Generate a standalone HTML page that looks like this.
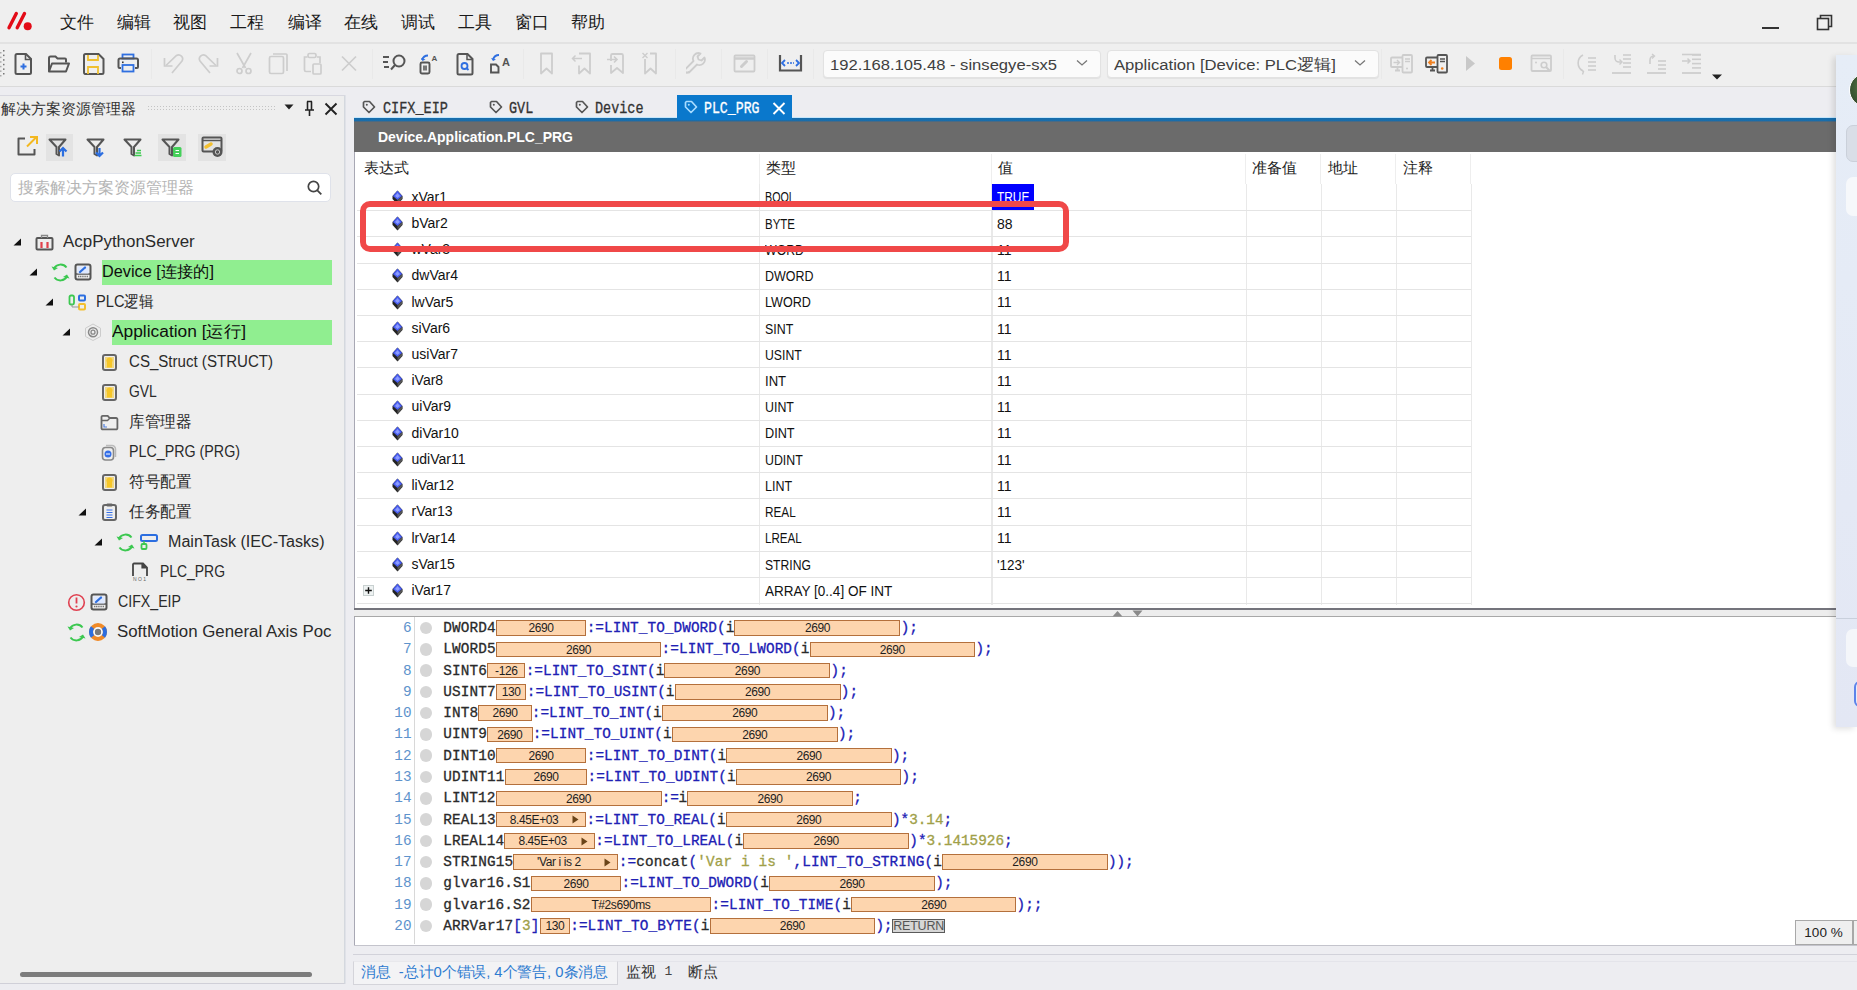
<!DOCTYPE html>
<html><head><meta charset="utf-8">
<style>
*{box-sizing:border-box}
body{margin:0;width:1857px;height:990px;position:relative;overflow:hidden;background:#ededf1;font-family:"Liberation Sans",sans-serif;color:#222}
.a{position:absolute}
#menubar{left:0;top:0;width:1857px;height:43px;background:#efefef}
#toolbar{left:0;top:42px;width:1857px;height:45px;background:#efefef;border-top:2px solid #e2e2e2;border-bottom:1px solid #dadada}
#leftpanel{left:0;top:95px;width:345px;box-shadow:1px 0 0 #e0e2e8;height:889px;background:#eeeeee;border-right:1px solid #d4d8de;border-top:1px solid #d8d8e0;border-bottom:1px solid #d0d0d8}
#doc{left:354px;top:118px;width:1503px;height:827px;background:#fff;border-left:1px solid #a8a8b4}
#bluebar{left:354px;top:117px;width:1503px;height:5px;background:linear-gradient(#c4e6fc 0,#c4e6fc 1px,#176cac 1px,#1a6eaa 4px,#4a6a84 4px)}
#dochdr{left:354px;top:122px;width:1503px;height:30px;background:#6b6b6b}
.mi{top:13px;font-size:17px;line-height:20px;color:#1a1a1a;white-space:nowrap}
.dd{top:50px;height:28px;background:#fbfbfb;border:1px solid #e2e2e2;border-radius:4px;box-shadow:0 1px 1px rgba(0,0,0,0.06)}
.ddt{top:55.8px;font-size:15.5px;line-height:18px;color:#404040;white-space:nowrap}
.tr{font-size:16px;line-height:20px;white-space:nowrap}
.tab{top:100px;-webkit-text-stroke:0.25px currentColor;font-family:"Liberation Mono",monospace;font-size:13.5px;line-height:17px;color:#333;white-space:nowrap}
.th{top:159px;font-size:15px;line-height:18px;color:#222;white-space:nowrap}
.td{font-size:14px;line-height:18px;color:#111;white-space:nowrap}
.ln{font-family:"Liberation Mono",monospace;font-size:14.37px;line-height:18px;color:#5e93cc;text-align:right;white-space:nowrap}
.cd{-webkit-text-stroke:0.3px currentColor;font-family:"Liberation Mono",monospace;font-size:14.37px;line-height:18px;white-space:nowrap}
.bx{height:15.4px;background:#fdd5ae;border:1.4px solid #b4703c;overflow:hidden}
.bt{position:absolute;top:0;text-align:center;font-size:12px;line-height:14.5px;letter-spacing:-0.4px;color:#1e1e1e;white-space:nowrap}
.rt{height:14.5px;background:#d6d6d6;border:1.3px solid #5a5a5a;font-size:12.5px;line-height:12px;text-align:center;color:#555;letter-spacing:-0.2px}
</style></head><body>
<div id="menubar" class="a">
<svg class="a" style="left:0;top:0" width="40" height="40"><g stroke="#e30b17" stroke-width="3.4" stroke-linecap="round"><line x1="16.3" y1="13.5" x2="9" y2="27.8"/><line x1="24.5" y1="13.5" x2="17.2" y2="27.8"/></g><circle cx="27.7" cy="26.3" r="4" fill="#e30b17"/></svg>
<div class="a mi" style="left:59.5px">文件</div>
<div class="a mi" style="left:117px">编辑</div>
<div class="a mi" style="left:173px">视图</div>
<div class="a mi" style="left:230px">工程</div>
<div class="a mi" style="left:288px">编译</div>
<div class="a mi" style="left:344px">在线</div>
<div class="a mi" style="left:401px">调试</div>
<div class="a mi" style="left:458px">工具</div>
<div class="a mi" style="left:515px">窗口</div>
<div class="a mi" style="left:571px">帮助</div>
<div class="a" style="left:1762px;top:27px;width:17px;height:2px;background:#333"></div>
<svg class="a" style="left:1815px;top:13px" width="20" height="20"><rect x="2.5" y="5.5" width="11" height="11" fill="none" stroke="#333" stroke-width="1.6"/><path d="M5.5 5.5V2.5h11v11h-3" fill="none" stroke="#333" stroke-width="1.6"/></svg>
</div>
<div id="toolbar" class="a"></div>
<svg class="a" style="left:0px;top:44px" width="6" height="36" viewBox="0 0 6 36"><rect x="3" y="6.0" width="1.5" height="1.5" fill="#777"/><rect x="0" y="8.0" width="1.5" height="1.5" fill="#aaa"/><rect x="3" y="10.6" width="1.5" height="1.5" fill="#777"/><rect x="0" y="12.6" width="1.5" height="1.5" fill="#aaa"/><rect x="3" y="15.2" width="1.5" height="1.5" fill="#777"/><rect x="0" y="17.2" width="1.5" height="1.5" fill="#aaa"/><rect x="3" y="19.8" width="1.5" height="1.5" fill="#777"/><rect x="0" y="21.8" width="1.5" height="1.5" fill="#aaa"/><rect x="3" y="24.4" width="1.5" height="1.5" fill="#777"/><rect x="0" y="26.4" width="1.5" height="1.5" fill="#aaa"/><rect x="3" y="29.0" width="1.5" height="1.5" fill="#777"/><rect x="0" y="31.0" width="1.5" height="1.5" fill="#aaa"/></svg>
<svg class="a" style="left:13px;top:52px" width="22" height="24" viewBox="0 0 22 24"><path d="M2.5 3.5a1.5 1.5 0 0 1 1.5-1.5h9l5 5v13.5a1.5 1.5 0 0 1-1.5 1.5H4a1.5 1.5 0 0 1-1.5-1.5z" fill="none" stroke="#555" stroke-width="2"/><path d="M12.5 2v5.5h6" fill="none" stroke="#555" stroke-width="1.6"/><path d="M10.5 11.5v6M7.5 14.5h6" stroke="#2f6fe0" stroke-width="2"/></svg>
<svg class="a" style="left:47px;top:54px" width="24" height="21" viewBox="0 0 24 21"><path d="M2 17.5V4a1.5 1.5 0 0 1 1.5-1.5h5l2 2h7.5a1 1 0 0 1 1 1v3" fill="none" stroke="#555" stroke-width="2"/><path d="M2 17.5l3-8h17l-3 8z" fill="none" stroke="#555" stroke-width="2" stroke-linejoin="round"/></svg>
<svg class="a" style="left:82px;top:52px" width="24" height="24" viewBox="0 0 24 24"><path d="M2 3.5A1.5 1.5 0 0 1 3.5 2h13l5 5v13.5a1.5 1.5 0 0 1-1.5 1.5h-17A1.5 1.5 0 0 1 2 20.5z" fill="none" stroke="#555" stroke-width="2"/><path d="M6 3v5h10V3M6 22v-7h10v7" fill="none" stroke="#f0c030" stroke-width="1.8"/></svg>
<svg class="a" style="left:117px;top:53px" width="23" height="21" viewBox="0 0 23 21"><rect x="5.5" y="1.5" width="11" height="4" fill="none" stroke="#2f6fe0" stroke-width="1.8"/><path d="M4 15H2.5a1 1 0 0 1-1-1V7a1.5 1.5 0 0 1 1.5-1.5h16.5A1.5 1.5 0 0 1 21 7v7a1 1 0 0 1-1 1h-2" fill="none" stroke="#555" stroke-width="2"/><rect x="5.5" y="12" width="11" height="6.5" fill="none" stroke="#2f6fe0" stroke-width="1.8"/><rect x="5" y="8.5" width="1.6" height="1.6" fill="#333"/></svg>
<div class="a" style="left:151px;top:49px;width:1px;height:30px;background:#e9e9e9"></div>
<svg class="a" style="left:162px;top:53px" width="23" height="22" viewBox="0 0 23 22"><path d="M4 12.5L14.5 2.5a4 4 0 0 1 5.5 5.5L10 20" fill="none" stroke="#cdcdcd" stroke-width="1.7"/><path d="M2.5 5v8h8" fill="none" stroke="#cdcdcd" stroke-width="1.7"/></svg>
<svg class="a" style="left:197px;top:53px" width="23" height="22" viewBox="0 0 23 22"><path d="M19 12.5L8.5 2.5A4 4 0 0 0 3 8l10 12" fill="none" stroke="#cdcdcd" stroke-width="1.7"/><path d="M20.5 5v8h-8" fill="none" stroke="#cdcdcd" stroke-width="1.7"/></svg>
<svg class="a" style="left:234px;top:52px" width="20" height="23" viewBox="0 0 20 23"><path d="M3 1l8.5 15M17 1L8.5 16" stroke="#cdcdcd" stroke-width="1.7"/><circle cx="5.5" cy="19" r="2.5" fill="none" stroke="#cdcdcd" stroke-width="1.7"/><circle cx="14.5" cy="19" r="2.5" fill="none" stroke="#cdcdcd" stroke-width="1.7"/></svg>
<svg class="a" style="left:268px;top:52px" width="21" height="23" viewBox="0 0 21 23"><rect x="1.5" y="4.5" width="14" height="17" rx="1.5" fill="none" stroke="#cdcdcd" stroke-width="1.7"/><path d="M5 2h13a1 1 0 0 1 1 1v16" fill="none" stroke="#cdcdcd" stroke-width="1.7"/></svg>
<svg class="a" style="left:303px;top:52px" width="20" height="23" viewBox="0 0 20 23"><path d="M8 19.5H3a1.5 1.5 0 0 1-1.5-1.5V5h3M14 5h3v6" fill="none" stroke="#cdcdcd" stroke-width="1.7"/><rect x="5" y="1.5" width="8" height="4" rx="1.5" fill="none" stroke="#cdcdcd" stroke-width="1.7"/><rect x="10" y="12" width="8" height="10" rx="1" fill="none" stroke="#cdcdcd" stroke-width="1.7"/></svg>
<svg class="a" style="left:341px;top:55px" width="16" height="17" viewBox="0 0 16 17"><path d="M1 1.5l14 14M15 1.5l-14 14" stroke="#cdcdcd" stroke-width="1.7"/></svg>
<div class="a" style="left:372px;top:49px;width:1px;height:30px;background:#e9e9e9"></div>
<svg class="a" style="left:382px;top:54px" width="26" height="19" viewBox="0 0 26 19"><path d="M1 3h6M1 8h5M2 13h5" stroke="#555" stroke-width="1.8"/><circle cx="17" cy="7" r="5.5" fill="none" stroke="#555" stroke-width="2"/><path d="M13 11l-4 4.5" stroke="#555" stroke-width="2"/></svg>
<svg class="a" style="left:419px;top:53px" width="21" height="22" viewBox="0 0 21 22"><rect x="1.5" y="9.5" width="9" height="11" rx="1.5" fill="none" stroke="#555" stroke-width="1.9"/><rect x="4" y="12.5" width="4" height="5" fill="#777"/><path d="M3 7c1-3 3-4.5 6-4.5" fill="none" stroke="#2f6fe0" stroke-width="2"/><path d="M2 5l1.5 3 3-1.5" fill="#2f6fe0"/><text x="12.5" y="8" font-size="8" fill="#555" font-family="Liberation Sans" font-weight="bold">A</text></svg>
<svg class="a" style="left:455px;top:52px" width="21" height="24" viewBox="0 0 21 24"><path d="M2.5 3.5A1.5 1.5 0 0 1 4 2h8.5l5 5v14a1.5 1.5 0 0 1-1.5 1.5H4a1.5 1.5 0 0 1-1.5-1.5z" fill="none" stroke="#555" stroke-width="2"/><path d="M12 2v5.5h5.5" fill="none" stroke="#555" stroke-width="1.5"/><circle cx="9.5" cy="14" r="3" fill="none" stroke="#2f6fe0" stroke-width="1.8"/><path d="M11.5 16l2 2" stroke="#2f6fe0" stroke-width="1.8"/></svg>
<svg class="a" style="left:489px;top:53px" width="23" height="21" viewBox="0 0 23 21"><path d="M2 19.5v-8h5l2.5 2.5v5.5z" fill="none" stroke="#555" stroke-width="1.9"/><path d="M4 6.5c1-3 3-4.5 6-4.5" fill="none" stroke="#2f6fe0" stroke-width="2"/><path d="M2 5l2 3 3-1.5" fill="#2f6fe0"/><text x="13" y="13" font-size="11" fill="#555" font-family="Liberation Sans" font-weight="bold">A</text></svg>
<div class="a" style="left:523px;top:49px;width:1px;height:30px;background:#e9e9e9"></div>
<svg class="a" style="left:536px;top:52px" width="22" height="23" viewBox="0 0 22 23"><path d="M5 1.5h11v20l-5.5-5-5.5 5z" fill="none" stroke="#cdcdcd" stroke-width="1.8" stroke-linejoin="round"/></svg>
<svg class="a" style="left:571px;top:52px" width="23" height="23" viewBox="0 0 23 23"><path d="M8 1.5h11v20l-5.5-5-5.5 5v-8" fill="none" stroke="#cdcdcd" stroke-width="1.8" stroke-linejoin="round"/><path d="M11 6.5H1.5M4.5 3.5l-3 3 3 3" fill="none" stroke="#cdcdcd" stroke-width="1.5"/></svg>
<svg class="a" style="left:606px;top:52px" width="22" height="23" viewBox="0 0 22 23"><path d="M5 9V3.5a1.5 1.5 0 0 1 1.5-1.5h9A1.5 1.5 0 0 1 17 3.5v17.5l-6-5-6 5v-8" fill="none" stroke="#cdcdcd" stroke-width="1.8" stroke-linejoin="round"/><path d="M1 7.5h10M8 4.5l3 3-3 3" fill="none" stroke="#cdcdcd" stroke-width="1.6"/></svg>
<svg class="a" style="left:642px;top:52px" width="20" height="23" viewBox="0 0 20 23"><path d="M3 7v14.5l5.5-5 5.5 5v-20h-6" fill="none" stroke="#cdcdcd" stroke-width="1.8" stroke-linejoin="round"/><path d="M0.5 1l5 5M5.5 1l-5 5" stroke="#cdcdcd" stroke-width="1.4"/></svg>
<div class="a" style="left:675px;top:49px;width:1px;height:30px;background:#e9e9e9"></div>
<svg class="a" style="left:686px;top:52px" width="24" height="24" viewBox="0 0 24 24"><path d="M3 20.5l8-8a5.5 5.5 0 0 0 7.5-7l-3 3-3-1-1-3 3-3a5.5 5.5 0 0 0-7 7.5l-8 8a2 2 0 0 0 3 3z" fill="none" stroke="#cdcdcd" stroke-width="1.8" stroke-linejoin="round"/></svg>
<div class="a" style="left:721px;top:49px;width:1px;height:30px;background:#e9e9e9"></div>
<svg class="a" style="left:733px;top:54px" width="23" height="19" viewBox="0 0 23 19"><rect x="1.5" y="1.5" width="20" height="16" rx="1" fill="none" stroke="#cdcdcd" stroke-width="1.8"/><path d="M1.5 4.5h20" stroke="#cdcdcd" stroke-width="2.5"/><path d="M8.5 12.5l5-5" stroke="#cdcdcd" stroke-width="3" stroke-linecap="round"/></svg>
<div class="a" style="left:767px;top:49px;width:1px;height:30px;background:#e9e9e9"></div>
<svg class="a" style="left:778px;top:54px" width="25" height="19" viewBox="0 0 25 19"><path d="M2 1v15.5h21V1" fill="none" stroke="#555" stroke-width="2.2"/><path d="M7 6l-3 3 3 3M18 6l3 3-3 3" fill="none" stroke="#2f6fe0" stroke-width="1.8"/><path d="M9 9h7" stroke="#2f6fe0" stroke-width="1.6" stroke-dasharray="2 1"/></svg>
<div class="a" style="left:813px;top:49px;width:1px;height:30px;background:#e9e9e9"></div>
<div class="a dd" style="left:822.5px;width:278px"></div><div class="a ddt" style="left:830.3px;--tw:227;transform:scale(1.0708,1.0);transform-origin:0 50%">192.168.105.48 - sinsegye-sx5</div>
<svg class="a" style="left:1075px;top:58px" width="14" height="10" viewBox="0 0 14 10"><path d="M2 2.5l5 4.5 5-4.5" fill="none" stroke="#777" stroke-width="1.3"/></svg>
<div class="a dd" style="left:1107px;width:272px"></div><div class="a ddt" style="left:1114px;--tw:222;transform:scale(1.0730,1.0);transform-origin:0 50%">Application [Device: PLC逻辑]</div>
<svg class="a" style="left:1353px;top:58px" width="14" height="10" viewBox="0 0 14 10"><path d="M2 2.5l5 4.5 5-4.5" fill="none" stroke="#777" stroke-width="1.3"/></svg>
<div class="a" style="left:1381px;top:49px;width:1px;height:30px;background:#e9e9e9"></div>
<svg class="a" style="left:1390px;top:54px" width="23" height="20" viewBox="0 0 23 20"><rect x="1" y="3.5" width="12" height="9.5" rx="1" fill="none" stroke="#cdcdcd" stroke-width="1.8"/><path d="M5 16.5h5M7.5 13v3.5" stroke="#cdcdcd" stroke-width="1.8"/><rect x="12.5" y="1" width="9.5" height="17.5" rx="1" fill="#efefef" stroke="#cdcdcd" stroke-width="1.8"/><path d="M15 5h5M15 7.5h5" stroke="#cdcdcd" stroke-width="1.5"/><path d="M3.5 8.5h6M7 6l2.5 2.5L7 11" fill="none" stroke="#cdcdcd" stroke-width="1.4"/><circle cx="17" cy="14.5" r="1" fill="#cdcdcd"/></svg>
<svg class="a" style="left:1425px;top:54px" width="23" height="20" viewBox="0 0 23 20"><rect x="1" y="3.5" width="12" height="9.5" rx="1" fill="none" stroke="#555" stroke-width="1.8"/><path d="M5 16.5h5M7.5 13v3.5" stroke="#555" stroke-width="1.8"/><rect x="12.5" y="1" width="9.5" height="17.5" rx="1" fill="#efefef" stroke="#555" stroke-width="1.8"/><path d="M15 5h5M15 7.5h5" stroke="#555" stroke-width="1.5"/><path d="M10 8.5H4M6.5 6L4 8.5 6.5 11" fill="none" stroke="#f08020" stroke-width="1.8"/><circle cx="17.2" cy="14.5" r="1.3" fill="#f08020"/></svg>
<svg class="a" style="left:1465px;top:55px" width="11" height="17" viewBox="0 0 11 17"><path d="M1 1l9 7.5-9 7.5z" fill="#c8c8c8"/></svg>
<div class="a" style="left:1499px;top:57px;width:13px;height:13px;background:#ff8000;border-radius:2.5px"></div>
<svg class="a" style="left:1530px;top:54px" width="23" height="20" viewBox="0 0 23 20"><rect x="1.5" y="1.5" width="19.5" height="15.5" rx="1" fill="none" stroke="#cdcdcd" stroke-width="1.8"/><path d="M1.5 4.5h19.5" stroke="#cdcdcd" stroke-width="1.5"/><circle cx="6" cy="8.5" r="1" fill="#cdcdcd"/><circle cx="14" cy="11" r="2.8" fill="none" stroke="#cdcdcd" stroke-width="1.6"/><path d="M16 13l3.5 3.5" stroke="#cdcdcd" stroke-width="2"/></svg>
<div class="a" style="left:1563px;top:49px;width:1px;height:30px;background:#e9e9e9"></div>
<svg class="a" style="left:1576px;top:52px" width="22" height="24" viewBox="0 0 22 24"><path d="M7 3a9 9 0 0 0 0 16" fill="none" stroke="#cdcdcd" stroke-width="1.6"/><path d="M4.5 17l3 2.5-1 3" fill="none" stroke="#cdcdcd" stroke-width="1.4"/><path d="M12 6.0h8" stroke="#cdcdcd" stroke-width="1.6"/><path d="M12 10.0h8" stroke="#cdcdcd" stroke-width="1.6"/><path d="M12 14.0h8" stroke="#cdcdcd" stroke-width="1.6"/><path d="M12 18.0h8" stroke="#cdcdcd" stroke-width="1.6"/></svg>
<svg class="a" style="left:1611px;top:52px" width="22" height="24" viewBox="0 0 22 24"><path d="M4 3v3a4 4 0 0 0 4 4h2" fill="none" stroke="#cdcdcd" stroke-width="1.6"/><path d="M8.5 7.5l2.5 2.5-2.5 2.5" fill="none" stroke="#cdcdcd" stroke-width="1.4"/><path d="M1 21h19" stroke="#cdcdcd" stroke-width="1.8"/><path d="M12 3.0h8" stroke="#cdcdcd" stroke-width="1.6"/><path d="M12 7.0h8" stroke="#cdcdcd" stroke-width="1.6"/><path d="M12 11.0h8" stroke="#cdcdcd" stroke-width="1.6"/><path d="M12 15.0h8" stroke="#cdcdcd" stroke-width="1.6"/></svg>
<svg class="a" style="left:1646px;top:52px" width="22" height="24" viewBox="0 0 22 24"><path d="M4 12V8a4 4 0 0 1 4-4" fill="none" stroke="#cdcdcd" stroke-width="1.6"/><path d="M6 2l2.5 2L6 6.5" fill="none" stroke="#cdcdcd" stroke-width="1.4"/><path d="M1 21h19" stroke="#cdcdcd" stroke-width="1.8"/><path d="M12 9.0h8" stroke="#cdcdcd" stroke-width="1.6"/><path d="M12 13.0h8" stroke="#cdcdcd" stroke-width="1.6"/><path d="M12 17.0h8" stroke="#cdcdcd" stroke-width="1.6"/></svg>
<svg class="a" style="left:1681px;top:52px" width="22" height="24" viewBox="0 0 22 24"><path d="M1 9h8M6.5 6.5L9 9l-2.5 2.5" fill="none" stroke="#cdcdcd" stroke-width="1.5"/><path d="M1 21h19" stroke="#cdcdcd" stroke-width="1.8"/><path d="M11 3.0h9" stroke="#cdcdcd" stroke-width="1.6"/><path d="M11 7.3h9" stroke="#cdcdcd" stroke-width="1.6"/><path d="M11 11.6h9" stroke="#cdcdcd" stroke-width="1.6"/><path d="M11 15.9h9" stroke="#cdcdcd" stroke-width="1.6"/><path d="M1 2.5h19" stroke="#cdcdcd" stroke-width="1.6"/></svg>
<svg class="a" style="left:1711px;top:74px" width="12" height="6" viewBox="0 0 12 6"><path d="M1 0.5h10L6 5.5z" fill="#222"/></svg>
<div id="leftpanel" class="a"></div>
<div class="a" style="left:1px;top:100px;font-size:15px;line-height:18px;color:#333;white-space:nowrap">解决方案资源管理器</div>
<div class="a" style="left:147px;top:105px;width:130px;height:6px;background-image:radial-gradient(circle,#c4c4c4 0.8px,transparent 0.9px);background-size:3px 3px"></div>
<svg class="a" style="left:284px;top:104px" width="10" height="6" viewBox="0 0 10 6"><path d="M0.5 0.5h9L5 5.5z" fill="#222"/></svg>
<svg class="a" style="left:304px;top:100px" width="11" height="17" viewBox="0 0 11 17"><path d="M3 1.5h5M3.5 1.5v8M7.5 1.5v8M1 10h9M5.5 10v6" fill="none" stroke="#222" stroke-width="1.6"/></svg>
<svg class="a" style="left:324px;top:102px" width="14" height="14" viewBox="0 0 14 14"><path d="M1.5 1.5l11 11M12.5 1.5l-11 11" stroke="#222" stroke-width="1.9"/></svg>
<div class="a" style="left:45.5px;top:134px;width:27.5px;height:27px;background:#e3e3e3"></div>
<div class="a" style="left:158px;top:134px;width:27.5px;height:27px;background:#e3e3e3"></div>
<div class="a" style="left:198px;top:134px;width:27.5px;height:27px;background:#e3e3e3"></div>
<svg class="a" style="left:16px;top:135px" width="24" height="22" viewBox="0 0 24 22"><path d="M9 3.5H2.5v16h16V14" fill="none" stroke="#555" stroke-width="2" stroke-linejoin="round"/><path d="M11 11.5L20.5 2M14 2h7v7" fill="none" stroke="#f3b820" stroke-width="2"/></svg>
<svg class="a" style="left:48px;top:137px" width="22" height="21" viewBox="0 0 22 21"><path d="M1.5 2.5h16l-6.5 7.5v8.5l-2.5-1.5v-7z" fill="none" stroke="#555" stroke-width="2" stroke-linejoin="round"/><path d="M15 19.5v-8M11.5 14.5l3.5-3.5 3.5 3.5" fill="none" stroke="#2c6ee0" stroke-width="2.2"/></svg>
<svg class="a" style="left:86px;top:137px" width="22" height="21" viewBox="0 0 22 21"><path d="M1.5 2.5h16l-6.5 7.5v8.5l-2.5-1.5v-7z" fill="none" stroke="#555" stroke-width="2" stroke-linejoin="round"/><path d="M13.5 11v8M10 15.5l3.5 3.5 3.5-3.5" fill="none" stroke="#2c6ee0" stroke-width="2.2"/></svg>
<svg class="a" style="left:123px;top:137px" width="22" height="21" viewBox="0 0 22 21"><path d="M1.5 2.5h16l-6.5 7.5v8.5l-2.5-1.5v-7z" fill="none" stroke="#555" stroke-width="2" stroke-linejoin="round"/><path d="M14 13.5h4M12.5 16h5.5M11.5 18.5h7" stroke="#3ccc50" stroke-width="1.3"/></svg>
<svg class="a" style="left:161px;top:137px" width="22" height="21" viewBox="0 0 22 21"><path d="M1.5 2.5h16l-6.5 7.5v8.5l-2.5-1.5v-7z" fill="none" stroke="#555" stroke-width="2" stroke-linejoin="round"/><rect x="12" y="10" width="8.5" height="10" rx="1.5" fill="#45d05a"/><path d="M14.5 13.5h3.5M14.5 16.5h3.5" stroke="#fff" stroke-width="1"/></svg>
<svg class="a" style="left:201px;top:136px" width="23" height="22" viewBox="0 0 23 22"><rect x="1.5" y="1.5" width="19" height="14" rx="1" fill="none" stroke="#555" stroke-width="2"/><path d="M1.5 4.5h19" stroke="#555" stroke-width="1.5"/><path d="M5 11l5-3" stroke="#f3c030" stroke-width="3.5" stroke-linecap="round"/><circle cx="16.5" cy="16" r="5" fill="#555"/><circle cx="16.5" cy="16" r="2.2" fill="none" stroke="#ccc" stroke-width="1"/></svg>
<div class="a" style="left:10px;top:173px;width:321px;height:29px;background:#fff;border:1px solid #dfe2ea;border-radius:5px"></div>
<div class="a" style="left:18px;top:178px;font-size:15.6px;line-height:19px;color:#b4b4b4;white-space:nowrap">搜索解决方案资源管理器</div>
<svg class="a" style="left:306px;top:179px" width="18" height="18" viewBox="0 0 18 18"><circle cx="7.5" cy="7.5" r="5.2" fill="none" stroke="#444" stroke-width="1.7"/><path d="M11.3 11.3l4 4" stroke="#444" stroke-width="1.8"/></svg>
<svg class="a" style="left:13px;top:238px" width="9" height="8" viewBox="0 0 9 8"><path d="M8 0.5V7.5H0.5z" fill="#111"/></svg>
<div class="a tr" style="left:63px;top:232px;color:#2a2a2a;--tw:131.7;transform:scale(1.0577,1.0);transform-origin:0 50%">AcpPythonServer</div>
<div class="a" style="left:102px;top:260px;width:230px;height:25px;background:#90ee90"></div>
<svg class="a" style="left:29px;top:268px" width="9" height="8" viewBox="0 0 9 8"><path d="M8 0.5V7.5H0.5z" fill="#111"/></svg>
<div class="a tr" style="left:102px;top:262px;color:#0f0f0f;--tw:112;transform:scale(1.0159,1.0);transform-origin:0 50%">Device [连接的]</div>
<svg class="a" style="left:45px;top:298px" width="9" height="8" viewBox="0 0 9 8"><path d="M8 0.5V7.5H0.5z" fill="#111"/></svg>
<div class="a tr" style="left:96px;top:292px;color:#2a2a2a;--tw:57.8;transform:scale(0.9156,1.0);transform-origin:0 50%">PLC逻辑</div>
<div class="a" style="left:111.7px;top:320px;width:220.3px;height:25px;background:#90ee90"></div>
<svg class="a" style="left:62px;top:328px" width="9" height="8" viewBox="0 0 9 8"><path d="M8 0.5V7.5H0.5z" fill="#111"/></svg>
<div class="a tr" style="left:112px;top:322px;color:#0f0f0f;--tw:134;transform:scale(1.0841,1.0);transform-origin:0 50%">Application [运行]</div>
<div class="a tr" style="left:128.5px;top:352px;color:#2a2a2a;--tw:144;transform:scale(0.9418,1.0);transform-origin:0 50%">CS_Struct (STRUCT)</div>
<div class="a tr" style="left:128.5px;top:382px;color:#2a2a2a;--tw:27.8;transform:scale(0.8683,1.0);transform-origin:0 50%">GVL</div>
<div class="a tr" style="left:128.5px;top:412px;color:#2a2a2a;--tw:62.6;transform:scale(0.9781,1.0);transform-origin:0 50%">库管理器</div>
<div class="a tr" style="left:128.5px;top:442px;color:#2a2a2a;--tw:111;transform:scale(0.8918,1.0);transform-origin:0 50%">PLC_PRG (PRG)</div>
<div class="a tr" style="left:128.5px;top:472px;color:#2a2a2a;--tw:62.6;transform:scale(0.9781,1.0);transform-origin:0 50%">符号配置</div>
<svg class="a" style="left:78px;top:508px" width="9" height="8" viewBox="0 0 9 8"><path d="M8 0.5V7.5H0.5z" fill="#111"/></svg>
<div class="a tr" style="left:128.5px;top:502px;color:#2a2a2a;--tw:62.6;transform:scale(0.9781,1.0);transform-origin:0 50%">任务配置</div>
<svg class="a" style="left:94px;top:538px" width="9" height="8" viewBox="0 0 9 8"><path d="M8 0.5V7.5H0.5z" fill="#111"/></svg>
<div class="a tr" style="left:167.5px;top:532px;color:#2a2a2a;--tw:156.5;transform:scale(1.0059,1.0);transform-origin:0 50%">MainTask (IEC-Tasks)</div>
<div class="a tr" style="left:160.3px;top:562px;color:#2a2a2a;--tw:65;transform:scale(0.8701,1.0);transform-origin:0 50%">PLC_PRG</div>
<div class="a tr" style="left:118.3px;top:592px;color:#2a2a2a;--tw:63;transform:scale(0.8856,1.0);transform-origin:0 50%">CIFX_EIP</div>
<div class="a tr" style="left:117.4px;top:622px;color:#2a2a2a;--tw:214.5;transform:scale(1.0532,1.0);transform-origin:0 50%">SoftMotion General Axis Poc</div>
<svg class="a" style="left:35px;top:234px" width="19" height="17" viewBox="0 0 19 17"><rect x="1.5" y="4" width="16" height="11.5" rx="1" fill="none" stroke="#555" stroke-width="2"/><path d="M6.5 4V1.5h6V4" fill="none" stroke="#888" stroke-width="1.3"/><path d="M6.5 8v6M12.5 8v6" stroke="#e0404a" stroke-width="2.2"/></svg>
<svg class="a" style="left:50px;top:263px" width="21" height="19" viewBox="0 0 21 19"><path d="M16.5 4.5A7.5 7.5 0 0 0 4 5.5" fill="none" stroke="#3cc850" stroke-width="2"/><path d="M1.5 3.5l2.5 4 4-2.5z" fill="#3cc850"/><path d="M4.5 14.5A7.5 7.5 0 0 0 17 13.5" fill="none" stroke="#3cc850" stroke-width="2"/><path d="M19.5 15.5l-2.5-4-4 2.5z" fill="#3cc850"/></svg>
<svg class="a" style="left:74px;top:263px" width="18" height="18" viewBox="0 0 18 18"><rect x="1.5" y="1.5" width="15" height="15" rx="2" fill="none" stroke="#555" stroke-width="2"/><path d="M1.5 11h15" stroke="#555" stroke-width="1.5"/><path d="M4 13.5h10" stroke="#777" stroke-width="1.5" stroke-dasharray="1.2 0.6"/><rect x="3.5" y="3.5" width="11" height="7" fill="#dde8ff"/><path d="M6 9l5-4.5" stroke="#2c6ee0" stroke-width="2.2" stroke-linecap="round"/></svg>
<svg class="a" style="left:68px;top:294px" width="19" height="17" viewBox="0 0 19 17"><rect x="1.5" y="1.5" width="4.5" height="9" rx="1.5" fill="none" stroke="#3cc850" stroke-width="1.8"/><rect x="11" y="1.5" width="6" height="5" rx="1" fill="none" stroke="#2c6ee0" stroke-width="2"/><rect x="11" y="10" width="6" height="5.5" rx="1" fill="none" stroke="#f3c030" stroke-width="2"/><path d="M4 10.5v2.5h7" fill="none" stroke="#999" stroke-width="1"/></svg>
<svg class="a" style="left:84px;top:323px" width="18" height="18" viewBox="0 0 18 18"><path d="M9 1l7.5 4.2v8.3L9 17.5 1.5 13.5V5.2z" fill="none" stroke="#ccc" stroke-width="1"/><circle cx="9" cy="9.2" r="4.5" fill="none" stroke="#888" stroke-width="1.5"/><circle cx="9" cy="9.2" r="2" fill="none" stroke="#888" stroke-width="1.3"/></svg>
<svg class="a" style="left:102px;top:354px" width="15" height="17" viewBox="0 0 15 17"><rect x="1" y="1" width="13" height="15" rx="2" fill="none" stroke="#666" stroke-width="2"/><path d="M7.5 3.5a3 3 0 0 1 2.5 4.8v5.2h-5V8.3a3 3 0 0 1 2.5-4.8z" fill="#f6c628"/><rect x="3" y="3" width="9" height="11" fill="#f6c628" opacity="0.55"/></svg>
<svg class="a" style="left:102px;top:384px" width="15" height="17" viewBox="0 0 15 17"><rect x="1" y="1" width="13" height="15" rx="2" fill="none" stroke="#666" stroke-width="2"/><path d="M7.5 3.5a3 3 0 0 1 2.5 4.8v5.2h-5V8.3a3 3 0 0 1 2.5-4.8z" fill="#f6c628"/><rect x="3" y="3" width="9" height="11" fill="#f6c628" opacity="0.55"/></svg>
<svg class="a" style="left:100px;top:414px" width="19" height="17" viewBox="0 0 19 17"><path d="M1.5 3a1.2 1.2 0 0 1 1.2-1.2h5l2 2.2h6.5a1.2 1.2 0 0 1 1.2 1.2v9a1.2 1.2 0 0 1-1.2 1.2H2.7a1.2 1.2 0 0 1-1.2-1.2z" fill="none" stroke="#666" stroke-width="1.8"/><path d="M1.5 6.5h6l2-2" fill="none" stroke="#666" stroke-width="1.4"/><path d="M4 10v3h3" fill="none" stroke="#5080e0" stroke-width="1.2"/></svg>
<svg class="a" style="left:101px;top:444px" width="16" height="17" viewBox="0 0 16 17"><path d="M5 1.5h6a3.5 3.5 0 0 1 3.5 3.5v8" fill="none" stroke="#bbb" stroke-width="1.5"/><rect x="1.5" y="3.5" width="11" height="12.5" rx="3" fill="#eee" stroke="#888" stroke-width="1.6"/><circle cx="7" cy="10" r="3.5" fill="#3670e8"/><path d="M5 10h4" stroke="#fff" stroke-width="1"/></svg>
<svg class="a" style="left:102px;top:474px" width="15" height="17" viewBox="0 0 15 17"><rect x="1" y="1" width="13" height="15" rx="2" fill="none" stroke="#666" stroke-width="2"/><path d="M7.5 3.5a3 3 0 0 1 2.5 4.8v5.2h-5V8.3a3 3 0 0 1 2.5-4.8z" fill="#f6c628"/><rect x="3" y="3" width="9" height="11" fill="#f6c628" opacity="0.55"/></svg>
<svg class="a" style="left:102px;top:503px" width="15" height="18" viewBox="0 0 15 18"><rect x="1" y="2" width="13" height="15" rx="2" fill="none" stroke="#666" stroke-width="2"/><rect x="4.5" y="0.5" width="6" height="3" rx="1" fill="#666"/><path d="M4.5 7h6M4.5 9.5h6M4.5 12h6M4.5 14.5h6" stroke="#3670e8" stroke-width="1.2"/></svg>
<svg class="a" style="left:115px;top:533px" width="21" height="19" viewBox="0 0 21 19"><path d="M16.5 4.5A7.5 7.5 0 0 0 4 5.5" fill="none" stroke="#3cc850" stroke-width="2"/><path d="M1.5 3.5l2.5 4 4-2.5z" fill="#3cc850"/><path d="M4.5 14.5A7.5 7.5 0 0 0 17 13.5" fill="none" stroke="#3cc850" stroke-width="2"/><path d="M19.5 15.5l-2.5-4-4 2.5z" fill="#3cc850"/></svg>
<svg class="a" style="left:140px;top:533px" width="18" height="18" viewBox="0 0 18 18"><rect x="1" y="2" width="16" height="6" rx="1.5" fill="none" stroke="#2c6ee0" stroke-width="2"/><rect x="1.5" y="11" width="5" height="5" rx="1" fill="none" stroke="#3cc850" stroke-width="1.8"/><path d="M4 8v3" stroke="#3cc850" stroke-width="1.5"/></svg>
<svg class="a" style="left:131px;top:561px" width="20" height="20" viewBox="0 0 20 20"><path d="M2 15V3.5a1 1 0 0 1 1-1h9l4 4V15" fill="none" stroke="#444" stroke-width="1.8"/><path d="M11 2.5v4.5h5" fill="#444" stroke="#444" stroke-width="1.2"/><text x="2" y="19.5" font-size="5" fill="#666" font-family="Liberation Sans">N O 1</text></svg>
<svg class="a" style="left:67px;top:593px" width="19" height="19" viewBox="0 0 19 19"><circle cx="9.5" cy="9.5" r="7.8" fill="none" stroke="#e04050" stroke-width="1.6"/><path d="M9.5 4.5v6" stroke="#e04050" stroke-width="1.8"/><circle cx="9.5" cy="13.5" r="1.1" fill="#e04050"/></svg>
<svg class="a" style="left:90px;top:593px" width="18" height="18" viewBox="0 0 18 18"><rect x="1.5" y="1.5" width="15" height="15" rx="2" fill="none" stroke="#555" stroke-width="2"/><path d="M1.5 11h15" stroke="#555" stroke-width="1.5"/><path d="M4 13.5h10" stroke="#777" stroke-width="1.5" stroke-dasharray="1.2 0.6"/><rect x="3.5" y="3.5" width="11" height="7" fill="#dde8ff"/><path d="M6 9l5-4.5" stroke="#2c6ee0" stroke-width="2.2" stroke-linecap="round"/></svg>
<svg class="a" style="left:66px;top:623px" width="21" height="19" viewBox="0 0 21 19"><path d="M16.5 4.5A7.5 7.5 0 0 0 4 5.5" fill="none" stroke="#3cc850" stroke-width="2"/><path d="M1.5 3.5l2.5 4 4-2.5z" fill="#3cc850"/><path d="M4.5 14.5A7.5 7.5 0 0 0 17 13.5" fill="none" stroke="#3cc850" stroke-width="2"/><path d="M19.5 15.5l-2.5-4-4 2.5z" fill="#3cc850"/></svg>
<svg class="a" style="left:88px;top:622px" width="20" height="20" viewBox="0 0 20 20"><circle cx="10" cy="10" r="7" fill="none" stroke="#f08a28" stroke-width="4"/><path d="M3 10a7 7 0 0 1 1.5-4.4M3 10a7 7 0 0 0 1.5 4.4M17 10a7 7 0 0 0-1.5-4.4M17 10a7 7 0 0 1-1.5 4.4" fill="none" stroke="#2c6ee0" stroke-width="4"/><circle cx="10" cy="10" r="4.2" fill="#fff"/><circle cx="10" cy="10" r="3.2" fill="#7a7a7a"/></svg>
<div class="a" style="left:20px;top:972px;width:292px;height:5px;background:#7c7c7c;border-radius:3px"></div>
<div id="doc" class="a"></div>
<div id="bluebar" class="a"></div>
<div id="dochdr" class="a"></div>
<div class="a" style="left:676.5px;top:95px;width:115.5px;height:25px;background:#0a78cc"></div>
<svg class="a" style="left:362px;top:100px" width="14" height="14" viewBox="0 0 14 14"><path d="M1.5 2.5l1-1h5l5 5.5-5.5 5.5L1.5 7z" fill="none" stroke="#555" stroke-width="1.7" stroke-linejoin="round"/><circle cx="4.8" cy="4.8" r="1" fill="#555"/></svg>
<div class="a tab" style="left:383px;--tw:65;--sy:1.22;transform:scale(1.0029,1.22);transform-origin:0 50%">CIFX_EIP</div>
<svg class="a" style="left:489px;top:100px" width="14" height="14" viewBox="0 0 14 14"><path d="M1.5 2.5l1-1h5l5 5.5-5.5 5.5L1.5 7z" fill="none" stroke="#555" stroke-width="1.7" stroke-linejoin="round"/><circle cx="4.8" cy="4.8" r="1" fill="#555"/></svg>
<div class="a tab" style="left:508.5px;--tw:24.3;--sy:1.22;transform:scale(0.9995,1.22);transform-origin:0 50%">GVL</div>
<svg class="a" style="left:575px;top:100px" width="14" height="14" viewBox="0 0 14 14"><path d="M1.5 2.5l1-1h5l5 5.5-5.5 5.5L1.5 7z" fill="none" stroke="#555" stroke-width="1.7" stroke-linejoin="round"/><circle cx="4.8" cy="4.8" r="1" fill="#555"/></svg>
<div class="a tab" style="left:594.5px;--tw:48.5;--sy:1.22;transform:scale(0.9977,1.22);transform-origin:0 50%">Device</div>
<svg class="a" style="left:683.5px;top:100px" width="14" height="14" viewBox="0 0 14 14"><path d="M1.5 2.5l1-1h5l5 5.5-5.5 5.5L1.5 7z" fill="none" stroke="#a8dcff" stroke-width="1.7" stroke-linejoin="round"/><circle cx="4.8" cy="4.8" r="1" fill="#a8dcff"/></svg>
<div class="a tab" style="left:703.5px;color:#fff;--tw:55.5;--sy:1.22;transform:scale(0.9785,1.22);transform-origin:0 50%">PLC_PRG</div>
<svg class="a" style="left:772px;top:102px" width="14" height="13" viewBox="0 0 14 13"><path d="M1.5 1l11 11M12.5 1l-11 11" stroke="#fff" stroke-width="1.9"/></svg>
<div class="a" style="left:378px;top:128px;font-size:14px;line-height:18px;font-weight:bold;color:#fff;white-space:nowrap;--tw:195;transform:scale(0.9986,1.0);transform-origin:0 50%">Device.Application.PLC_PRG</div>
<div class="a th" style="left:364px">表达式</div>
<div class="a th" style="left:766px">类型</div>
<div class="a th" style="left:998px">值</div>
<div class="a th" style="left:1252px">准备值</div>
<div class="a th" style="left:1328px">地址</div>
<div class="a th" style="left:1402.5px">注释</div>
<div class="a" style="left:758.5px;top:154px;width:1px;height:30px;background:#eeeeee"></div>
<div class="a" style="left:990.5px;top:154px;width:1px;height:30px;background:#eeeeee"></div>
<div class="a" style="left:1245px;top:154px;width:1px;height:30px;background:#eeeeee"></div>
<div class="a" style="left:1320px;top:154px;width:1px;height:30px;background:#eeeeee"></div>
<div class="a" style="left:1395px;top:154px;width:1px;height:30px;background:#eeeeee"></div>
<div class="a" style="left:1470px;top:154px;width:1px;height:30px;background:#eeeeee"></div>
<div class="a" style="left:758.5px;top:184px;width:1px;height:420.5px;background:#e8e8e8"></div>
<div class="a" style="left:991.0px;top:184px;width:1.6px;height:420.5px;background:#e9e9e9"></div>
<div class="a" style="left:1245.5px;top:184px;width:1.6px;height:420.5px;background:#e9e9e9"></div>
<div class="a" style="left:1320.5px;top:184px;width:1.6px;height:420.5px;background:#e9e9e9"></div>
<div class="a" style="left:1395.5px;top:184px;width:1.6px;height:420.5px;background:#e9e9e9"></div>
<div class="a" style="left:1470.5px;top:184px;width:1.6px;height:420.5px;background:#e9e9e9"></div>
<div class="a" style="left:357px;top:210.0px;width:1114px;height:1px;background:#e4e4e4"></div>
<div class="a" style="left:991.5px;top:184px;width:42.5px;height:25.5px;background:#0000ff"></div>
<svg class="a" style="left:391.5px;top:190px" width="11" height="15" viewBox="0 0 11 15"><path d="M5.5 0.5L10.5 6v3L5.5 14.5 0.5 9V6z" fill="#222"/><path d="M5.5 0.8L10.2 6 5.5 10 0.8 6z" fill="#4a5ef0"/><path d="M5.5 3L8 6 5.5 8 3 6z" fill="#8a9aff"/><path d="M5.5 10L10.2 6.2v2.6L5.5 14z" fill="#555"/></svg>
<div class="a td" style="left:411.5px;top:187.6px">xVar1</div>
<div class="a td" style="left:765px;top:188.4px;--tw:29.7;transform:scale(0.7634,1.0);transform-origin:0 50%">BOOL</div>
<div class="a td" style="left:997px;top:188.4px;color:#fff;--tw:32.4;transform:scale(0.8498,1.0);transform-origin:0 50%">TRUE</div>
<div class="a" style="left:357px;top:236.2px;width:1114px;height:1px;background:#e4e4e4"></div>
<svg class="a" style="left:391.5px;top:216px" width="11" height="15" viewBox="0 0 11 15"><path d="M5.5 0.5L10.5 6v3L5.5 14.5 0.5 9V6z" fill="#222"/><path d="M5.5 0.8L10.2 6 5.5 10 0.8 6z" fill="#4a5ef0"/><path d="M5.5 3L8 6 5.5 8 3 6z" fill="#8a9aff"/><path d="M5.5 10L10.2 6.2v2.6L5.5 14z" fill="#555"/></svg>
<div class="a td" style="left:411.5px;top:213.8px">bVar2</div>
<div class="a td" style="left:765px;top:214.6px;--tw:30;transform:scale(0.8202,1.0);transform-origin:0 50%">BYTE</div>
<div class="a td" style="left:997px;top:214.6px;color:#111">88</div>
<div class="a" style="left:357px;top:262.5px;width:1114px;height:1px;background:#e4e4e4"></div>
<svg class="a" style="left:391.5px;top:242px" width="11" height="15" viewBox="0 0 11 15"><path d="M5.5 0.5L10.5 6v3L5.5 14.5 0.5 9V6z" fill="#222"/><path d="M5.5 0.8L10.2 6 5.5 10 0.8 6z" fill="#4a5ef0"/><path d="M5.5 3L8 6 5.5 8 3 6z" fill="#8a9aff"/><path d="M5.5 10L10.2 6.2v2.6L5.5 14z" fill="#555"/></svg>
<div class="a td" style="left:411.5px;top:240.0px">wVar3</div>
<div class="a td" style="left:765px;top:240.8px;--tw:39;transform:scale(0.8798,1.0);transform-origin:0 50%">WORD</div>
<div class="a td" style="left:997px;top:240.8px;color:#111">11</div>
<div class="a" style="left:357px;top:288.7px;width:1114px;height:1px;background:#e4e4e4"></div>
<svg class="a" style="left:391.5px;top:268px" width="11" height="15" viewBox="0 0 11 15"><path d="M5.5 0.5L10.5 6v3L5.5 14.5 0.5 9V6z" fill="#222"/><path d="M5.5 0.8L10.2 6 5.5 10 0.8 6z" fill="#4a5ef0"/><path d="M5.5 3L8 6 5.5 8 3 6z" fill="#8a9aff"/><path d="M5.5 10L10.2 6.2v2.6L5.5 14z" fill="#555"/></svg>
<div class="a td" style="left:411.5px;top:266.3px">dwVar4</div>
<div class="a td" style="left:765px;top:267.1px;--tw:48.4;transform:scale(0.8891,1.0);transform-origin:0 50%">DWORD</div>
<div class="a td" style="left:997px;top:267.1px;color:#111">11</div>
<div class="a" style="left:357px;top:314.9px;width:1114px;height:1px;background:#e4e4e4"></div>
<svg class="a" style="left:391.5px;top:295px" width="11" height="15" viewBox="0 0 11 15"><path d="M5.5 0.5L10.5 6v3L5.5 14.5 0.5 9V6z" fill="#222"/><path d="M5.5 0.8L10.2 6 5.5 10 0.8 6z" fill="#4a5ef0"/><path d="M5.5 3L8 6 5.5 8 3 6z" fill="#8a9aff"/><path d="M5.5 10L10.2 6.2v2.6L5.5 14z" fill="#555"/></svg>
<div class="a td" style="left:411.5px;top:292.5px">lwVar5</div>
<div class="a td" style="left:765px;top:293.3px;--tw:45.9;transform:scale(0.8986,1.0);transform-origin:0 50%">LWORD</div>
<div class="a td" style="left:997px;top:293.3px;color:#111">11</div>
<div class="a" style="left:357px;top:341.1px;width:1114px;height:1px;background:#e4e4e4"></div>
<svg class="a" style="left:391.5px;top:321px" width="11" height="15" viewBox="0 0 11 15"><path d="M5.5 0.5L10.5 6v3L5.5 14.5 0.5 9V6z" fill="#222"/><path d="M5.5 0.8L10.2 6 5.5 10 0.8 6z" fill="#4a5ef0"/><path d="M5.5 3L8 6 5.5 8 3 6z" fill="#8a9aff"/><path d="M5.5 10L10.2 6.2v2.6L5.5 14z" fill="#555"/></svg>
<div class="a td" style="left:411.5px;top:318.7px">siVar6</div>
<div class="a td" style="left:765px;top:319.5px;--tw:28.2;transform:scale(0.8843,1.0);transform-origin:0 50%">SINT</div>
<div class="a td" style="left:997px;top:319.5px;color:#111">11</div>
<div class="a" style="left:357px;top:367.3px;width:1114px;height:1px;background:#e4e4e4"></div>
<svg class="a" style="left:391.5px;top:347px" width="11" height="15" viewBox="0 0 11 15"><path d="M5.5 0.5L10.5 6v3L5.5 14.5 0.5 9V6z" fill="#222"/><path d="M5.5 0.8L10.2 6 5.5 10 0.8 6z" fill="#4a5ef0"/><path d="M5.5 3L8 6 5.5 8 3 6z" fill="#8a9aff"/><path d="M5.5 10L10.2 6.2v2.6L5.5 14z" fill="#555"/></svg>
<div class="a td" style="left:411.5px;top:344.9px">usiVar7</div>
<div class="a td" style="left:765px;top:345.7px;--tw:36.7;transform:scale(0.8738,1.0);transform-origin:0 50%">USINT</div>
<div class="a td" style="left:997px;top:345.7px;color:#111">11</div>
<div class="a" style="left:357px;top:393.6px;width:1114px;height:1px;background:#e4e4e4"></div>
<svg class="a" style="left:391.5px;top:373px" width="11" height="15" viewBox="0 0 11 15"><path d="M5.5 0.5L10.5 6v3L5.5 14.5 0.5 9V6z" fill="#222"/><path d="M5.5 0.8L10.2 6 5.5 10 0.8 6z" fill="#4a5ef0"/><path d="M5.5 3L8 6 5.5 8 3 6z" fill="#8a9aff"/><path d="M5.5 10L10.2 6.2v2.6L5.5 14z" fill="#555"/></svg>
<div class="a td" style="left:411.5px;top:371.1px">iVar8</div>
<div class="a td" style="left:765px;top:371.9px;--tw:21.1;transform:scale(0.9352,1.0);transform-origin:0 50%">INT</div>
<div class="a td" style="left:997px;top:371.9px;color:#111">11</div>
<div class="a" style="left:357px;top:419.8px;width:1114px;height:1px;background:#e4e4e4"></div>
<svg class="a" style="left:391.5px;top:400px" width="11" height="15" viewBox="0 0 11 15"><path d="M5.5 0.5L10.5 6v3L5.5 14.5 0.5 9V6z" fill="#222"/><path d="M5.5 0.8L10.2 6 5.5 10 0.8 6z" fill="#4a5ef0"/><path d="M5.5 3L8 6 5.5 8 3 6z" fill="#8a9aff"/><path d="M5.5 10L10.2 6.2v2.6L5.5 14z" fill="#555"/></svg>
<div class="a td" style="left:411.5px;top:397.4px">uiVar9</div>
<div class="a td" style="left:765px;top:398.2px;--tw:28.9;transform:scale(0.8846,1.0);transform-origin:0 50%">UINT</div>
<div class="a td" style="left:997px;top:398.2px;color:#111">11</div>
<div class="a" style="left:357px;top:446.0px;width:1114px;height:1px;background:#e4e4e4"></div>
<svg class="a" style="left:391.5px;top:426px" width="11" height="15" viewBox="0 0 11 15"><path d="M5.5 0.5L10.5 6v3L5.5 14.5 0.5 9V6z" fill="#222"/><path d="M5.5 0.8L10.2 6 5.5 10 0.8 6z" fill="#4a5ef0"/><path d="M5.5 3L8 6 5.5 8 3 6z" fill="#8a9aff"/><path d="M5.5 10L10.2 6.2v2.6L5.5 14z" fill="#555"/></svg>
<div class="a td" style="left:411.5px;top:423.6px">diVar10</div>
<div class="a td" style="left:765px;top:424.4px;--tw:29.6;transform:scale(0.9060,1.0);transform-origin:0 50%">DINT</div>
<div class="a td" style="left:997px;top:424.4px;color:#111">11</div>
<div class="a" style="left:357px;top:472.2px;width:1114px;height:1px;background:#e4e4e4"></div>
<svg class="a" style="left:391.5px;top:452px" width="11" height="15" viewBox="0 0 11 15"><path d="M5.5 0.5L10.5 6v3L5.5 14.5 0.5 9V6z" fill="#222"/><path d="M5.5 0.8L10.2 6 5.5 10 0.8 6z" fill="#4a5ef0"/><path d="M5.5 3L8 6 5.5 8 3 6z" fill="#8a9aff"/><path d="M5.5 10L10.2 6.2v2.6L5.5 14z" fill="#555"/></svg>
<div class="a td" style="left:411.5px;top:449.8px">udiVar11</div>
<div class="a td" style="left:765px;top:450.6px;--tw:37.8;transform:scale(0.8836,1.0);transform-origin:0 50%">UDINT</div>
<div class="a td" style="left:997px;top:450.6px;color:#111">11</div>
<div class="a" style="left:357px;top:498.4px;width:1114px;height:1px;background:#e4e4e4"></div>
<svg class="a" style="left:391.5px;top:478px" width="11" height="15" viewBox="0 0 11 15"><path d="M5.5 0.5L10.5 6v3L5.5 14.5 0.5 9V6z" fill="#222"/><path d="M5.5 0.8L10.2 6 5.5 10 0.8 6z" fill="#4a5ef0"/><path d="M5.5 3L8 6 5.5 8 3 6z" fill="#8a9aff"/><path d="M5.5 10L10.2 6.2v2.6L5.5 14z" fill="#555"/></svg>
<div class="a td" style="left:411.5px;top:476.0px">liVar12</div>
<div class="a td" style="left:765px;top:476.8px;--tw:27.1;transform:scale(0.8931,1.0);transform-origin:0 50%">LINT</div>
<div class="a td" style="left:997px;top:476.8px;color:#111">11</div>
<div class="a" style="left:357px;top:524.7px;width:1114px;height:1px;background:#e4e4e4"></div>
<svg class="a" style="left:391.5px;top:504px" width="11" height="15" viewBox="0 0 11 15"><path d="M5.5 0.5L10.5 6v3L5.5 14.5 0.5 9V6z" fill="#222"/><path d="M5.5 0.8L10.2 6 5.5 10 0.8 6z" fill="#4a5ef0"/><path d="M5.5 3L8 6 5.5 8 3 6z" fill="#8a9aff"/><path d="M5.5 10L10.2 6.2v2.6L5.5 14z" fill="#555"/></svg>
<div class="a td" style="left:411.5px;top:502.2px">rVar13</div>
<div class="a td" style="left:765px;top:503.0px;--tw:30.7;transform:scale(0.8393,1.0);transform-origin:0 50%">REAL</div>
<div class="a td" style="left:997px;top:503.0px;color:#111">11</div>
<div class="a" style="left:357px;top:550.9px;width:1114px;height:1px;background:#e4e4e4"></div>
<svg class="a" style="left:391.5px;top:531px" width="11" height="15" viewBox="0 0 11 15"><path d="M5.5 0.5L10.5 6v3L5.5 14.5 0.5 9V6z" fill="#222"/><path d="M5.5 0.8L10.2 6 5.5 10 0.8 6z" fill="#4a5ef0"/><path d="M5.5 3L8 6 5.5 8 3 6z" fill="#8a9aff"/><path d="M5.5 10L10.2 6.2v2.6L5.5 14z" fill="#555"/></svg>
<div class="a td" style="left:411.5px;top:528.5px">lrVar14</div>
<div class="a td" style="left:765px;top:529.3px;--tw:36.7;transform:scale(0.8273,1.0);transform-origin:0 50%">LREAL</div>
<div class="a td" style="left:997px;top:529.3px;color:#111">11</div>
<div class="a" style="left:357px;top:577.1px;width:1114px;height:1px;background:#e4e4e4"></div>
<svg class="a" style="left:391.5px;top:557px" width="11" height="15" viewBox="0 0 11 15"><path d="M5.5 0.5L10.5 6v3L5.5 14.5 0.5 9V6z" fill="#222"/><path d="M5.5 0.8L10.2 6 5.5 10 0.8 6z" fill="#4a5ef0"/><path d="M5.5 3L8 6 5.5 8 3 6z" fill="#8a9aff"/><path d="M5.5 10L10.2 6.2v2.6L5.5 14z" fill="#555"/></svg>
<div class="a td" style="left:411.5px;top:554.7px">sVar15</div>
<div class="a td" style="left:765px;top:555.5px;--tw:45.9;transform:scale(0.8678,1.0);transform-origin:0 50%">STRING</div>
<div class="a td" style="left:997px;top:555.5px;color:#111;--tw:27.6;transform:scale(0.9610,1.0);transform-origin:0 50%">'123'</div>
<div class="a" style="left:357px;top:603.3px;width:1114px;height:1px;background:#e4e4e4"></div>
<svg class="a" style="left:391.5px;top:583px" width="11" height="15" viewBox="0 0 11 15"><path d="M5.5 0.5L10.5 6v3L5.5 14.5 0.5 9V6z" fill="#222"/><path d="M5.5 0.8L10.2 6 5.5 10 0.8 6z" fill="#4a5ef0"/><path d="M5.5 3L8 6 5.5 8 3 6z" fill="#8a9aff"/><path d="M5.5 10L10.2 6.2v2.6L5.5 14z" fill="#555"/></svg>
<div class="a td" style="left:411.5px;top:580.9px">iVar17</div>
<div class="a td" style="left:765px;top:581.7px;--tw:127.2;transform:scale(0.9655,1.0);transform-origin:0 50%">ARRAY [0..4] OF INT</div>
<svg class="a" style="left:363px;top:585px" width="11" height="11" viewBox="0 0 11 11"><rect x="0.5" y="0.5" width="10" height="10" fill="#eef2f2" stroke="#c8d0d0"/><path d="M2.2 5.5h6.6M5.5 2.2v6.6" stroke="#111" stroke-width="1.4"/></svg>
<div class="a" style="left:354px;top:608px;width:1503px;height:2px;background:#74747c"></div>
<div class="a" style="left:354px;top:610px;width:1503px;height:6px;background:#ededed"></div>
<div class="a" style="left:354px;top:616px;width:1503px;height:1px;background:#a8a8a8"></div>
<svg class="a" style="left:1112px;top:610px" width="11" height="7" viewBox="0 0 11 7"><path d="M0.5 6.5L5.5 1l5 5.5z" fill="#8a8a8a"/></svg>
<svg class="a" style="left:1132px;top:610px" width="11" height="7" viewBox="0 0 11 7"><path d="M0.5 0.5h10L5.5 6.5z" fill="#8a8a8a"/></svg>
<div class="a" style="left:360px;top:201px;width:709px;height:51px;border:6px solid #f04848;border-radius:10px"></div>
<div class="a" style="left:413.5px;top:617px;width:1px;height:327px;background:#d8d8d8"></div>
<div class="a ln" style="left:370px;top:619.00px;width:41.5px">6</div>
<div class="a" style="left:419.6px;top:621.70px;width:12.6px;height:12.6px;border-radius:50%;background:#d6d6d6"></div>
<div class="a cd" style="left:443.20px;top:619.00px;letter-spacing:0.130px"><span style="color:#2a2a2a">DWORD4</span></div>
<div class="a bx" style="left:495.70px;top:620.30px;width:90.80px"><span class="bt" style="left:0;width:100%">2690</span></div>
<div class="a cd" style="left:586.70px;top:619.00px;letter-spacing:0.068px"><span style="color:#2020b4">:=LINT_TO_DWORD(</span><span style="color:#2a2a2a">i</span></div>
<div class="a bx" style="left:734.40px;top:620.30px;width:166.10px"><span class="bt" style="left:0;width:100%">2690</span></div>
<div class="a cd" style="left:900.70px;top:619.00px;letter-spacing:0.000px"><span style="color:#2020b4">);</span></div>
<div class="a ln" style="left:370px;top:640.29px;width:41.5px">7</div>
<div class="a" style="left:419.6px;top:642.99px;width:12.6px;height:12.6px;border-radius:50%;background:#d6d6d6"></div>
<div class="a cd" style="left:443.20px;top:640.29px;letter-spacing:0.130px"><span style="color:#2a2a2a">LWORD5</span></div>
<div class="a bx" style="left:495.70px;top:641.59px;width:165.70px"><span class="bt" style="left:0;width:100%">2690</span></div>
<div class="a cd" style="left:661.60px;top:640.29px;letter-spacing:0.080px"><span style="color:#2020b4">:=LINT_TO_LWORD(</span><span style="color:#2a2a2a">i</span></div>
<div class="a bx" style="left:809.50px;top:641.59px;width:165.70px"><span class="bt" style="left:0;width:100%">2690</span></div>
<div class="a cd" style="left:975.40px;top:640.29px;letter-spacing:0.000px"><span style="color:#2020b4">);</span></div>
<div class="a ln" style="left:370px;top:661.58px;width:41.5px">8</div>
<div class="a" style="left:419.6px;top:664.28px;width:12.6px;height:12.6px;border-radius:50%;background:#d6d6d6"></div>
<div class="a cd" style="left:443.20px;top:661.58px;letter-spacing:0.160px"><span style="color:#2a2a2a">SINT6</span></div>
<div class="a bx" style="left:487.10px;top:662.88px;width:38.40px"><span class="bt" style="left:0;width:100%">-126</span></div>
<div class="a cd" style="left:525.70px;top:661.58px;letter-spacing:0.049px"><span style="color:#2020b4">:=LINT_TO_SINT(</span><span style="color:#2a2a2a">i</span></div>
<div class="a bx" style="left:664.40px;top:662.88px;width:166.00px"><span class="bt" style="left:0;width:100%">2690</span></div>
<div class="a cd" style="left:830.60px;top:661.58px;letter-spacing:0.000px"><span style="color:#2020b4">);</span></div>
<div class="a ln" style="left:370px;top:682.87px;width:41.5px">9</div>
<div class="a" style="left:419.6px;top:685.57px;width:12.6px;height:12.6px;border-radius:50%;background:#d6d6d6"></div>
<div class="a cd" style="left:443.20px;top:682.87px;letter-spacing:0.130px"><span style="color:#2a2a2a">USINT7</span></div>
<div class="a bx" style="left:495.70px;top:684.17px;width:30.80px"><span class="bt" style="left:0;width:100%">130</span></div>
<div class="a cd" style="left:526.70px;top:682.87px;letter-spacing:0.080px"><span style="color:#2020b4">:=LINT_TO_USINT(</span><span style="color:#2a2a2a">i</span></div>
<div class="a bx" style="left:674.60px;top:684.17px;width:166.00px"><span class="bt" style="left:0;width:100%">2690</span></div>
<div class="a cd" style="left:840.80px;top:682.87px;letter-spacing:0.000px"><span style="color:#2020b4">);</span></div>
<div class="a ln" style="left:370px;top:704.16px;width:41.5px">10</div>
<div class="a" style="left:419.6px;top:706.86px;width:12.6px;height:12.6px;border-radius:50%;background:#d6d6d6"></div>
<div class="a cd" style="left:443.20px;top:704.16px;letter-spacing:0.155px"><span style="color:#2a2a2a">INT8</span></div>
<div class="a bx" style="left:478.30px;top:705.46px;width:53.30px"><span class="bt" style="left:0;width:100%">2690</span></div>
<div class="a cd" style="left:531.80px;top:704.16px;letter-spacing:0.047px"><span style="color:#2020b4">:=LINT_TO_INT(</span><span style="color:#2a2a2a">i</span></div>
<div class="a bx" style="left:661.80px;top:705.46px;width:166.00px"><span class="bt" style="left:0;width:100%">2690</span></div>
<div class="a cd" style="left:828.00px;top:704.16px;letter-spacing:0.000px"><span style="color:#2020b4">);</span></div>
<div class="a ln" style="left:370px;top:725.45px;width:41.5px">11</div>
<div class="a" style="left:419.6px;top:728.15px;width:12.6px;height:12.6px;border-radius:50%;background:#d6d6d6"></div>
<div class="a cd" style="left:443.20px;top:725.45px;letter-spacing:0.140px"><span style="color:#2a2a2a">UINT9</span></div>
<div class="a bx" style="left:487.00px;top:726.75px;width:45.50px"><span class="bt" style="left:0;width:100%">2690</span></div>
<div class="a cd" style="left:532.70px;top:725.45px;letter-spacing:0.068px"><span style="color:#2020b4">:=LINT_TO_UINT(</span><span style="color:#2a2a2a">i</span></div>
<div class="a bx" style="left:671.70px;top:726.75px;width:166.00px"><span class="bt" style="left:0;width:100%">2690</span></div>
<div class="a cd" style="left:837.90px;top:725.45px;letter-spacing:0.000px"><span style="color:#2020b4">);</span></div>
<div class="a ln" style="left:370px;top:746.74px;width:41.5px">12</div>
<div class="a" style="left:419.6px;top:749.44px;width:12.6px;height:12.6px;border-radius:50%;background:#d6d6d6"></div>
<div class="a cd" style="left:443.20px;top:746.74px;letter-spacing:0.130px"><span style="color:#2a2a2a">DINT10</span></div>
<div class="a bx" style="left:495.70px;top:748.04px;width:90.80px"><span class="bt" style="left:0;width:100%">2690</span></div>
<div class="a cd" style="left:586.70px;top:746.74px;letter-spacing:0.099px"><span style="color:#2020b4">:=LINT_TO_DINT(</span><span style="color:#2a2a2a">i</span></div>
<div class="a bx" style="left:726.20px;top:748.04px;width:165.50px"><span class="bt" style="left:0;width:100%">2690</span></div>
<div class="a cd" style="left:891.90px;top:746.74px;letter-spacing:0.000px"><span style="color:#2020b4">);</span></div>
<div class="a ln" style="left:370px;top:768.03px;width:41.5px">13</div>
<div class="a" style="left:419.6px;top:770.73px;width:12.6px;height:12.6px;border-radius:50%;background:#d6d6d6"></div>
<div class="a cd" style="left:443.20px;top:768.03px;letter-spacing:0.137px"><span style="color:#2a2a2a">UDINT11</span></div>
<div class="a bx" style="left:504.50px;top:769.33px;width:82.90px"><span class="bt" style="left:0;width:100%">2690</span></div>
<div class="a cd" style="left:587.60px;top:768.03px;letter-spacing:0.092px"><span style="color:#2020b4">:=LINT_TO_UDINT(</span><span style="color:#2a2a2a">i</span></div>
<div class="a bx" style="left:735.70px;top:769.33px;width:165.70px"><span class="bt" style="left:0;width:100%">2690</span></div>
<div class="a cd" style="left:901.60px;top:768.03px;letter-spacing:0.000px"><span style="color:#2020b4">);</span></div>
<div class="a ln" style="left:370px;top:789.32px;width:41.5px">14</div>
<div class="a" style="left:419.6px;top:792.02px;width:12.6px;height:12.6px;border-radius:50%;background:#d6d6d6"></div>
<div class="a cd" style="left:443.20px;top:789.32px;letter-spacing:0.097px"><span style="color:#2a2a2a">LINT12</span></div>
<div class="a bx" style="left:495.50px;top:790.62px;width:166.10px"><span class="bt" style="left:0;width:100%">2690</span></div>
<div class="a cd" style="left:661.80px;top:789.32px;letter-spacing:-0.220px"><span style="color:#2020b4">:=</span><span style="color:#2a2a2a">i</span></div>
<div class="a bx" style="left:687.00px;top:790.62px;width:166.00px"><span class="bt" style="left:0;width:100%">2690</span></div>
<div class="a cd" style="left:853.20px;top:789.32px;letter-spacing:0.000px"><span style="color:#2020b4">;</span></div>
<div class="a ln" style="left:370px;top:810.61px;width:41.5px">15</div>
<div class="a" style="left:419.6px;top:813.31px;width:12.6px;height:12.6px;border-radius:50%;background:#d6d6d6"></div>
<div class="a cd" style="left:443.20px;top:810.61px;letter-spacing:0.130px"><span style="color:#2a2a2a">REAL13</span></div>
<div class="a bx" style="left:495.70px;top:811.91px;width:90.70px"><span class="bt" style="left:0;width:74.7px">8.45E+03</span><svg class="a" style="left:75.7px;top:2.5px" width="7" height="9"><path d="M0.5 0.5L6.5 4.5 0.5 8.5z" fill="#6a4418"/></svg></div>
<div class="a cd" style="left:586.60px;top:810.61px;letter-spacing:0.080px"><span style="color:#2020b4">:=LINT_TO_REAL(</span><span style="color:#2a2a2a">i</span></div>
<div class="a bx" style="left:725.80px;top:811.91px;width:165.90px"><span class="bt" style="left:0;width:100%">2690</span></div>
<div class="a cd" style="left:891.90px;top:810.61px;letter-spacing:0.000px"><span style="color:#2020b4">)*</span><span style="color:#a0a048">3.14</span><span style="color:#2020b4">;</span></div>
<div class="a ln" style="left:370px;top:831.90px;width:41.5px">16</div>
<div class="a" style="left:419.6px;top:834.60px;width:12.6px;height:12.6px;border-radius:50%;background:#d6d6d6"></div>
<div class="a cd" style="left:443.20px;top:831.90px;letter-spacing:0.109px"><span style="color:#2a2a2a">LREAL14</span></div>
<div class="a bx" style="left:504.30px;top:833.20px;width:90.70px"><span class="bt" style="left:0;width:74.7px">8.45E+03</span><svg class="a" style="left:75.7px;top:2.5px" width="7" height="9"><path d="M0.5 0.5L6.5 4.5 0.5 8.5z" fill="#6a4418"/></svg></div>
<div class="a cd" style="left:595.20px;top:831.90px;letter-spacing:0.086px"><span style="color:#2020b4">:=LINT_TO_LREAL(</span><span style="color:#2a2a2a">i</span></div>
<div class="a bx" style="left:743.20px;top:833.20px;width:165.90px"><span class="bt" style="left:0;width:100%">2690</span></div>
<div class="a cd" style="left:909.30px;top:831.90px;letter-spacing:0.000px"><span style="color:#2020b4">)*</span><span style="color:#a0a048">3.1415926</span><span style="color:#2020b4">;</span></div>
<div class="a ln" style="left:370px;top:853.19px;width:41.5px">17</div>
<div class="a" style="left:419.6px;top:855.89px;width:12.6px;height:12.6px;border-radius:50%;background:#d6d6d6"></div>
<div class="a cd" style="left:443.20px;top:853.19px;letter-spacing:0.142px"><span style="color:#2a2a2a">STRING15</span></div>
<div class="a bx" style="left:513.30px;top:854.49px;width:105.20px"><span class="bt" style="left:0;width:89.2px">'Var i is 2</span><svg class="a" style="left:90.2px;top:2.5px" width="7" height="9"><path d="M0.5 0.5L6.5 4.5 0.5 8.5z" fill="#6a4418"/></svg></div>
<div class="a cd" style="left:618.70px;top:853.19px;letter-spacing:0.121px"><span style="color:#2020b4">:=</span><span style="color:#2a2a2a">concat</span><span style="color:#2020b4">(</span><span style="color:#a0a048">'Var&nbsp;i&nbsp;is&nbsp;'</span><span style="color:#2020b4">,LINT_TO_STRING(</span><span style="color:#2a2a2a">i</span></div>
<div class="a bx" style="left:942.10px;top:854.49px;width:165.60px"><span class="bt" style="left:0;width:100%">2690</span></div>
<div class="a cd" style="left:1107.90px;top:853.19px;letter-spacing:0.000px"><span style="color:#2020b4">));</span></div>
<div class="a ln" style="left:370px;top:874.48px;width:41.5px">18</div>
<div class="a" style="left:419.6px;top:877.18px;width:12.6px;height:12.6px;border-radius:50%;background:#d6d6d6"></div>
<div class="a cd" style="left:443.20px;top:874.48px;letter-spacing:0.120px"><span style="color:#2a2a2a">glvar16.S1</span></div>
<div class="a bx" style="left:530.60px;top:875.78px;width:90.70px"><span class="bt" style="left:0;width:100%">2690</span></div>
<div class="a cd" style="left:621.50px;top:874.48px;letter-spacing:0.056px"><span style="color:#2020b4">:=LINT_TO_DWORD(</span><span style="color:#2a2a2a">i</span></div>
<div class="a bx" style="left:769.00px;top:875.78px;width:166.00px"><span class="bt" style="left:0;width:100%">2690</span></div>
<div class="a cd" style="left:935.20px;top:874.48px;letter-spacing:0.000px"><span style="color:#2020b4">);</span></div>
<div class="a ln" style="left:370px;top:895.77px;width:41.5px">19</div>
<div class="a" style="left:419.6px;top:898.47px;width:12.6px;height:12.6px;border-radius:50%;background:#d6d6d6"></div>
<div class="a cd" style="left:443.20px;top:895.77px;letter-spacing:0.120px"><span style="color:#2a2a2a">glvar16.S2</span></div>
<div class="a bx" style="left:530.60px;top:897.07px;width:180.70px"><span class="bt" style="left:0;width:100%">T#2s690ms</span></div>
<div class="a cd" style="left:711.50px;top:895.77px;letter-spacing:0.099px"><span style="color:#2020b4">:=LINT_TO_TIME(</span><span style="color:#2a2a2a">i</span></div>
<div class="a bx" style="left:851.00px;top:897.07px;width:165.40px"><span class="bt" style="left:0;width:100%">2690</span></div>
<div class="a cd" style="left:1016.60px;top:895.77px;letter-spacing:0.000px"><span style="color:#2020b4">);;</span></div>
<div class="a ln" style="left:370px;top:917.06px;width:41.5px">20</div>
<div class="a" style="left:419.6px;top:919.76px;width:12.6px;height:12.6px;border-radius:50%;background:#d6d6d6"></div>
<div class="a cd" style="left:443.20px;top:917.06px;letter-spacing:0.144px"><span style="color:#2a2a2a">ARRVar17</span><span style="color:#2020b4">[</span><span style="color:#a0a048">3</span><span style="color:#2020b4">]</span></div>
<div class="a bx" style="left:539.60px;top:918.36px;width:30.40px"><span class="bt" style="left:0;width:100%">130</span></div>
<div class="a cd" style="left:570.20px;top:917.06px;letter-spacing:0.086px"><span style="color:#2020b4">:=LINT_TO_BYTE(</span><span style="color:#2a2a2a">i</span></div>
<div class="a bx" style="left:709.50px;top:918.36px;width:165.70px"><span class="bt" style="left:0;width:100%">2690</span></div>
<div class="a cd" style="left:875.40px;top:917.06px;letter-spacing:-0.320px"><span style="color:#2020b4">);</span></div>
<div class="a rt" style="left:892.00px;top:918.86px;width:53.30px">RETURN</div>
<div class="a" style="left:354px;top:944.5px;width:1503px;height:1px;background:#c4c4cc"></div>
<div class="a" style="left:1794.5px;top:920px;width:58px;height:25px;background:#efefef;border:1px solid #a8a8a8;font-size:13.5px;line-height:23px;text-align:center;color:#222">100 %</div>
<div class="a" style="left:1852.5px;top:920px;width:6px;height:25px;background:#efefef;border:1px solid #a8a8a8"></div>
<div class="a" style="left:353px;top:954px;width:1504px;height:1px;background:#d2d2da"></div>
<div class="a" style="left:617px;top:960.5px;width:1240px;height:1px;background:#e4e4ea"></div>
<div class="a" style="left:353px;top:960.5px;width:265px;height:24px;background:#f3f3f5;border:1px solid #d4d4da;border-top-color:#e8e8ec"></div>
<div class="a" style="left:361px;top:963px;font-size:15px;line-height:18px;color:#2e7bd0;white-space:nowrap;--tw:247;transform:scale(0.9879,1.0);transform-origin:0 50%">消息&nbsp;&nbsp;-总计0个错误, 4个警告, 0条消息</div>
<div class="a" style="left:626px;top:963px;font-size:15px;line-height:18px;color:#333;white-space:nowrap">监视</div>
<div class="a" style="left:664.5px;top:963px;font-family:'Liberation Mono',monospace;font-size:13px;line-height:18px;color:#444;white-space:nowrap">1</div>
<div class="a" style="left:688px;top:963px;font-size:15px;line-height:18px;color:#333;white-space:nowrap">断点</div>
<div class="a" style="left:1836px;top:55px;width:21px;height:672px;background:linear-gradient(#e6edf7,#e3e7f4);box-shadow:-3px 2px 6px rgba(0,0,0,0.12)"></div>
<div class="a" style="left:1849px;top:73px;width:34px;height:34px;border-radius:50%;background:radial-gradient(circle at 60% 40%,#6f8f58,#3c5a34 60%,#2a3e28);border:1.5px solid #fff"></div>
<div class="a" style="left:1846px;top:125px;width:30px;height:37px;border-radius:7px;background:#d9dee7;border:1px solid #cad0da"></div>
<div class="a" style="left:1846px;top:177px;width:30px;height:39px;border-radius:7px;background:#f6f8fb"></div>
<div class="a" style="left:1836px;top:617.5px;width:21px;height:1px;background:#c9d0dc"></div>
<div class="a" style="left:1846px;top:628.5px;width:30px;height:38px;border-radius:7px;background:#f4f6fa"></div>
<div class="a" style="left:1854px;top:681px;width:20px;height:26px;border-radius:6px;border:2px solid #5d84ea;background:#e8eefa"></div>
</body></html>
